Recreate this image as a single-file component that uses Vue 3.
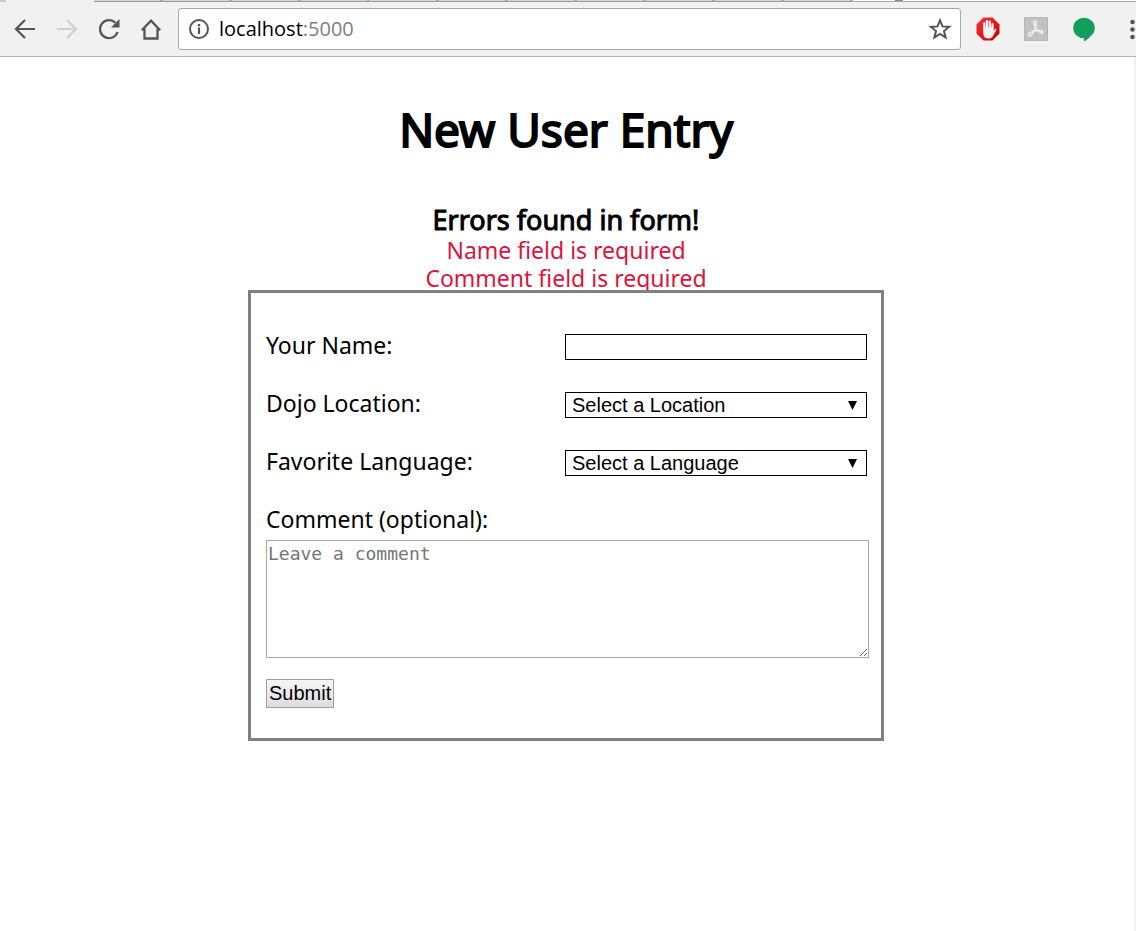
<script setup>
import { ref } from 'vue'

const tabs = 11
const errors = ['Name field is required', 'Comment field is required']
const name = ref('')
const location = ref('')
const language = ref('')
const comment = ref('')
</script>

<template>
  <div class="browser">
    <header>
      <div class="tabstrip">
        <span class="active-tab"></span>
        <span v-for="n in tabs" :key="n" class="tab"></span>
        <span class="strip-rest"><i></i></span>
      </div>
      <nav class="toolbar" aria-label="Browser toolbar">
        <button class="tool" type="button" aria-label="Back">
          <svg viewBox="0 0 24 24"><path d="M22 12H3.500M12 3L3 12l9 9" fill="none" stroke="#555" stroke-width="2.200" /></svg>
        </button>
        <button class="tool" type="button" aria-label="Forward">
          <svg viewBox="0 0 24 24"><path d="M2 12h18.500M12 3l9 9-9 9" fill="none" stroke="#d0d0d0" stroke-width="2.200" /></svg>
        </button>
        <button class="tool" type="button" aria-label="Reload">
          <svg viewBox="0 0 24 24"><path d="M20.600 15A9 9 0 1 1 18.300 5.600" fill="none" stroke="#555" stroke-width="2.300" /><path d="M22.500 2v8.500H14z" fill="#555" /></svg>
        </button>
        <button class="tool" type="button" aria-label="Home">
          <svg viewBox="0 0 24 24"><path d="M2.800 13.200L12 3.700l9.200 9.500M5.500 11.500v10h13v-10" fill="none" stroke="#555" stroke-width="2.300" /></svg>
        </button>
        <div class="address">
          <svg viewBox="0 0 24 24" aria-hidden="true"><circle cx="12" cy="12" r="9" fill="none" stroke="#555" stroke-width="2" /><path d="M12 10.500V17M12 7v2.300" stroke="#555" stroke-width="2.200" /></svg>
          <span class="url">localhost<span class="port">:5000</span></span>
          <button class="star" type="button" aria-label="Bookmark">
            <svg viewBox="0 0 24 24"><path d="M12 3.300l2.500 6.100 6.600.5-5.100 4.200 1.600 6.400L12 17l-5.600 3.500L8 14.100 2.900 9.900l6.600-.5z" fill="none" stroke="#555" stroke-width="2" /></svg>
          </button>
        </div>
        <div class="extensions">
          <button class="tool" type="button" aria-label="Ad blocker">
            <svg viewBox="0 0 24 24">
              <defs><linearGradient id="red" x2="1" y2="1"><stop stop-color="#f33" /><stop offset="1" stop-color="#c40000" /></linearGradient></defs>
              <path d="M7.500.5h9L23.500 7.500v9L16.500 23.500h-9L.5 16.500v-9z" fill="url(#red)" />
              <path d="M8.300 12V6M11 11V4M13.800 11V4.500M16.500 12V7" stroke="#fff" stroke-width="2.200" stroke-linecap="round" />
              <path d="M7.200 10.500h10.400v3.500l1.700-2.300q1.600-.2.900 1.400l-3.300 6.200q-1.200 2.200-4 2.200-5.700 0-5.700-5.500z" fill="#f4f4f4" />
            </svg>
          </button>
          <button class="tool" type="button" aria-label="PDF tools">
            <svg viewBox="0 0 24 24">
              <rect x=".5" y=".5" width="23" height="23" fill="#c2c2c2" stroke="#b6b6b6" />
              <path d="M11.500 10.500C9 6 9.500 4 11 4s2 2 .5 6.500C10 15 7.500 19 5.500 19c-2.500-.7-.5-3.500 4-4.700 4.500-1.200 9.500-1.200 9.500.9 0 2.500-5 .3-7.500-4.700z" fill="none" stroke="#f0f0f0" stroke-width="1.500" />
            </svg>
          </button>
          <button class="tool" type="button" aria-label="Chat">
            <svg viewBox="0 0 24 24"><ellipse cx="12" cy="11" rx="10.800" ry="10.300" fill="#129f5a" /><path d="M12 20v4.500q5.500-2.500 8-8z" fill="#129f5a" /></svg>
          </button>
          <button class="tool more" type="button" aria-label="Menu">
            <svg viewBox="0 0 24 24"><g fill="#555"><circle cx="12.500" cy="5" r="2.300" /><circle cx="12.500" cy="12.500" r="2.300" /><circle cx="12.500" cy="20" r="2.300" /></g></svg>
          </button>
        </div>
      </nav>
    </header>

    <main>
      <h1>New User Entry</h1>
      <section class="errors" role="alert">
        <h2>Errors found in form!</h2>
        <p v-for="error in errors" :key="error">{{ error }}</p>
      </section>

      <form @submit.prevent>
        <div class="row">
          <label for="name">Your Name:</label>
          <input id="name" v-model="name" type="text" />
        </div>
        <div class="row">
          <label for="location">Dojo Location:</label>
          <div class="select">
            <select id="location" v-model="location">
              <option value="">Select a Location</option>
            </select>
            <svg viewBox="0 0 9 9" aria-hidden="true"><path d="M0 0h9L4.500 9z" /></svg>
          </div>
        </div>
        <div class="row">
          <label for="language">Favorite Language:</label>
          <div class="select">
            <select id="language" v-model="language">
              <option value="">Select a Language</option>
            </select>
            <svg viewBox="0 0 9 9" aria-hidden="true"><path d="M0 0h9L4.500 9z" /></svg>
          </div>
        </div>
        <label for="comment">Comment (optional):</label>
        <textarea id="comment" v-model="comment" placeholder="Leave a comment"></textarea>
        <button class="submit" type="submit">Submit</button>
      </form>
    </main>
  </div>
</template>

<style>
body {
  margin: 0;
  background: #fff;
}
</style>

<style scoped>
* {
  box-sizing: border-box;
}
.browser {
  display: flex;
  flex-direction: column;
  min-height: 100vh;
  font-family: "Noto Sans", "Open Sans", sans-serif;
  color: #000;
}
svg {
  display: block;
}
header {
  background: #f1f1f1;
  border-bottom: 1px solid #b3b3b3;
}
.tabstrip {
  display: flex;
  height: 2px;
}
.active-tab {
  width: 94px;
  border-left: 6px solid #ccc;
}
.tab {
  width: 69px;
  background: #d8d8d8;
  border-right: 3px solid #aaa;
  border-bottom: 1px solid #999;
}
.strip-rest {
  flex: 1;
  display: flex;
  align-items: flex-end;
  padding-left: 42px;
  background: #fff;
  border-bottom: 1px solid #aaa;
}
.strip-rest i {
  width: 8px;
  height: 1px;
  background: #888;
}
.toolbar {
  display: flex;
  align-items: center;
  height: 54px;
  padding: 0 0 0 13px;
}
button {
  font-family: inherit;
  color: inherit;
}
.tool,
.star {
  flex: none;
  width: 24px;
  height: 24px;
  margin-right: 18px;
  padding: 0;
  border: 0;
  background: none;
}
.address {
  flex: 1;
  display: flex;
  align-items: center;
  height: 42px;
  margin: 0 15px 0 -3px;
  padding: 0 8px;
  background: #fff;
  border: 1px solid #a9a9a9;
  border-radius: 3px;
}
.address svg {
  width: 24px;
  height: 24px;
}
.url {
  flex: 1;
  margin-left: 8px;
  font-family: "Open Sans", sans-serif;
  font-size: 20px;
  line-height: 28px;
}
.port {
  color: #808080;
}
.star {
  margin: 0;
}
.extensions {
  display: flex;
  gap: 24px;
  width: 160px;
  overflow: hidden;
}
.extensions .tool {
  margin: 0;
}
main {
  flex: 1;
  display: flex;
  flex-direction: column;
  align-items: center;
  padding: 40px 2px 40px 0;
  border-right: 2px solid #f1f1f1;
}
h1,
h2,
p {
  margin: 0;
  font-weight: 400;
  text-align: center;
}
h1 {
  margin-bottom: 44px;
  font-size: 46px;
  line-height: 64px;
  -webkit-text-stroke: 2px #000;
}
h2 {
  margin-bottom: 1px;
  font-size: 27px;
  line-height: 30px;
  -webkit-text-stroke: 1px #000;
}
p {
  font-size: 23px;
  line-height: 28px;
  color: #dc143c;
}
form {
  position: relative;
  width: 100%;
  max-width: 636px;
  margin-top: -2px;
  padding: 36px 12px 30px 15px;
  border: 3px solid #808080;
  background: #fff;
}
.row {
  display: flex;
  align-items: flex-start;
  justify-content: space-between;
  margin-bottom: 26px;
  padding-right: 2px;
}
label {
  display: block;
  font-size: 23px;
  line-height: 32px;
}
input,
.select {
  width: 302px;
  max-width: 60%;
  height: 26px;
  margin: 5px 0 0;
}
input,
select {
  padding: 0 6px;
  border: 1px solid #000;
  border-radius: 0;
  background: #fff;
  color: #000;
  font-family: "Liberation Sans", Arial, sans-serif;
  font-size: 20px;
}
.select {
  position: relative;
}
select {
  display: block;
  width: 100%;
  height: 100%;
  margin: 0;
  appearance: none;
}
.select svg {
  position: absolute;
  top: 9px;
  right: 10px;
  width: 9px;
  height: 9px;
  pointer-events: none;
}
textarea {
  display: block;
  width: 100%;
  height: 118px;
  margin: 5px 0 21px;
  padding: 2px 1px;
  border: 1px solid #a9a9a9;
  border-radius: 0;
  font-family: "DejaVu Sans Mono", monospace;
  font-size: 18px;
  line-height: 22px;
}
textarea::placeholder {
  color: #757575;
}
.submit {
  display: block;
  height: 29px;
  padding: 0 2px;
  border: 1px solid #a0a0a0;
  border-radius: 0;
  background: linear-gradient(#f6f6f6, #ddd);
  font-family: "Liberation Sans", Arial, sans-serif;
  font-size: 20px;
}
</style>
